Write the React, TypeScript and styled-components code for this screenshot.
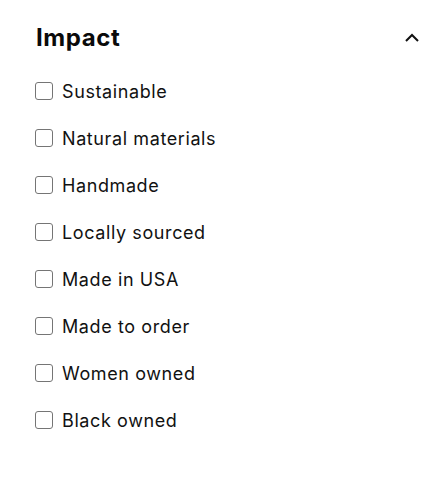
import React, { useState } from 'react';
import styled, { createGlobalStyle } from 'styled-components';

const GlobalStyle = createGlobalStyle`
  body {
    margin: 0;
    background: #ffffff;
    font-family: "Inter", "Liberation Sans", sans-serif;
    color: #111111;
  }
`;

const Panel = styled.section`
  width: 448px;
  padding: 22px 28px 0 36px;
  box-sizing: border-box;
`;

const Header = styled.button`
  display: flex;
  align-items: center;
  justify-content: space-between;
  width: 100%;
  padding: 0;
  border: none;
  background: none;
  cursor: pointer;
  color: inherit;
  font-family: inherit;
`;

const Title = styled.h3`
  margin: 0;
  font-size: 24px;
  font-weight: 700;
  line-height: 32px;
  letter-spacing: 0.6px;
  color: #0a0a0a;
`;

const Chevron = styled.svg<{ $open: boolean }>`
  width: 16px;
  height: 16px;
  transform: rotate(${p => (p.$open ? 0 : 180)}deg);
`;

const List = styled.ul`
  list-style: none;
  margin: 24px 0 0 -1px;
  padding: 0;
  display: flex;
  flex-direction: column;
  gap: 21px;
`;

const Item = styled.label`
  display: flex;
  align-items: center;
  gap: 9px;
  height: 26px;
  font-size: 18px;
  letter-spacing: 0.6px;
  cursor: pointer;
`;

const Box = styled.span<{ $checked: boolean }>`
  width: 18px;
  height: 18px;
  box-sizing: border-box;
  border: 1px solid #757575;
  border-radius: 3px;
  background: ${p => (p.$checked ? '#222' : '#fff')};
`;

const options = [
  'Sustainable',
  'Natural materials',
  'Handmade',
  'Locally sourced',
  'Made in USA',
  'Made to order',
  'Women owned',
  'Black owned',
];

export default function App() {
  const [open, setOpen] = useState(true);
  const [checked, setChecked] = useState<string[]>([]);

  const toggle = (name: string) => {
    setChecked(c => (c.includes(name) ? c.filter(x => x !== name) : [...c, name]));
  };

  return (
    <>
      <GlobalStyle />
      <Panel>
        <Header onClick={() => setOpen(!open)}>
          <Title>Impact</Title>
          <Chevron $open={open} viewBox="0 0 16 16" fill="none">
            <path d="M2 11 L8 5 L14 11" stroke="#111" strokeWidth="2" />
          </Chevron>
        </Header>
        {open && (
          <List>
            {options.map(o => (
              <li key={o}>
                <Item onClick={() => toggle(o)}>
                  <Box $checked={checked.includes(o)} />
                  {o}
                </Item>
              </li>
            ))}
          </List>
        )}
      </Panel>
    </>
  );
}
